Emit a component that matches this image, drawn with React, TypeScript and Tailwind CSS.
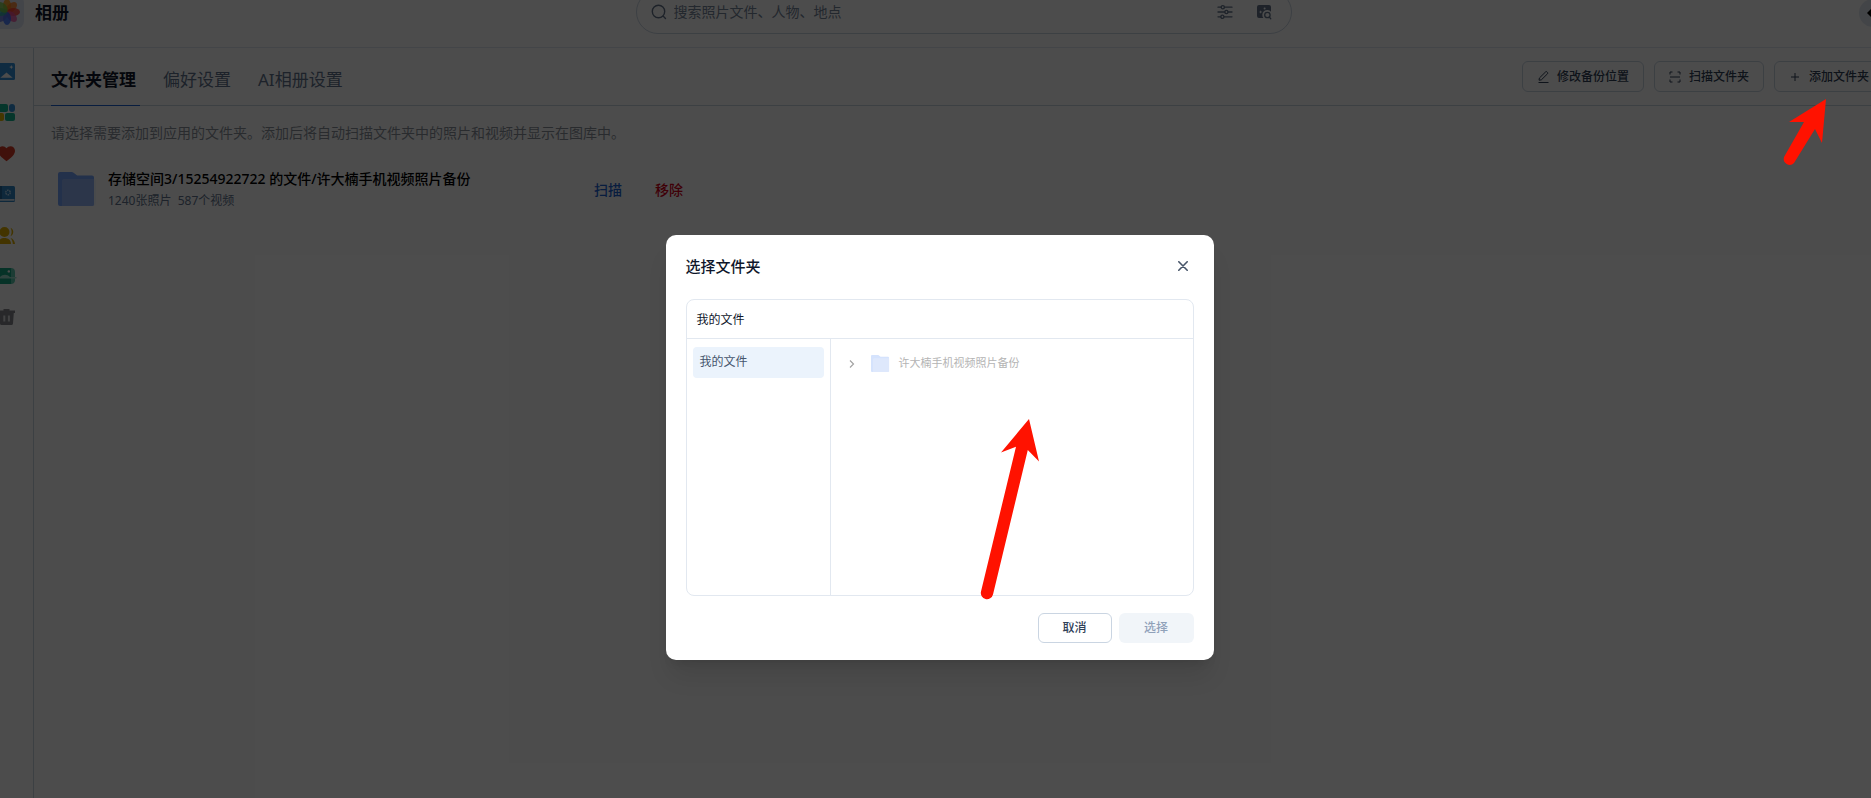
import React from 'react';

const SearchIcon: React.FC = () => (
  <svg viewBox="0 0 16 16" className="size-4 shrink-0" fill="none" stroke="#64748b" strokeWidth="1.4" strokeLinecap="round">
    <circle cx="7.5" cy="7.5" r="6.2" />
    <path d="M12.3 12.3l2.200 2.200" />
  </svg>
);

const FilterIcon: React.FC = () => (
  <svg viewBox="0 0 16 16" className="size-4" fill="none" stroke="#64748b" strokeWidth="1.3" strokeLinecap="round">
    <path d="M1 3.2h3.2M7.4 3.2H15M1 8h6.800M11 8h4M1 12.8h2.8M7 12.8h8" />
    <circle cx="5.8" cy="3.2" r="1.6" />
    <circle cx="9.4" cy="8" r="1.6" />
    <circle cx="5.4" cy="12.8" r="1.6" />
  </svg>
);

const ImageSearchIcon: React.FC = () => (
  <svg viewBox="0 0 16 16" className="size-4" fill="none">
    <path d="M3 1h10a2 2 0 0 1 2 2v4.800a4.600 4.600 0 0 0-7.600 6.200H3a2 2 0 0 1-2-2V3a2 2 0 0 1 2-2z" fill="#64748b" />
    <circle cx="8.600" cy="4.4" r="1" fill="#fff" />
    <path d="M4.6 6.2l.6 1.200 1.200.5-1.200.6-.6 1.200-.5-1.200-1.200-.6 1.200-.5z" fill="#fff" />
    <circle cx="11.400" cy="11" r="2.700" stroke="#64748b" strokeWidth="1.3" />
    <path d="M13.400 13l1.400 1.800" stroke="#64748b" strokeWidth="1.3" strokeLinecap="round" />
  </svg>
);

const petals = ['#ff9500', '#ff7a1a', '#ff3b30', '#e84fa0', '#2f6bff', '#5a6fe0', '#2fb5a0', '#7ac943'];

const LogoIcon: React.FC = () => (
  <svg viewBox="0 0 34 34" className="-ml-[10px] size-[34px] shrink-0">
    <rect width="34" height="34" rx="8" fill="#e2e6f5" />
    {petals.map((color, i) => (
      <ellipse key={color} cx="17" cy="10.5" rx="4" ry="6.5" fill={color} opacity="0.8" transform={`rotate(${i * 45} 17 17)`} />
    ))}
  </svg>
);

const FolderIcon: React.FC<{ className: string }> = ({ className }) => (
  <svg viewBox="0 0 38 34" className={className}>
    <path d="M2 0h11.5c1 0 1.6.3 2.4.9l2.6 2c.6.4 1 .6 1.8.6H34a2 2 0 0 1 2 2V32a2 2 0 0 1-2 2H2a2 2 0 0 1-2-2V2a2 2 0 0 1 2-2z" fill="#76a4fa" />
    <path d="M6.5 7H36a2 2 0 0 1 2 2v21.5a3.5 3.5 0 0 1-3.5 3.5H4V9.5A2.5 2.5 0 0 1 6.5 7z" fill="#dbe7ff" opacity="0.35" />
    <path d="M6.5 7H36v25a2 2 0 0 1-2 2H4V9.5A2.5 2.5 0 0 1 6.5 7z" fill="#94b6f8" />
  </svg>
);

const sideItems: { label: string; icon: React.ReactNode }[] = [
  {
    label: '图库',
    icon: (
      <>
        <rect width="17" height="17" rx="1.5" fill="#3391da" />
        <path d="M2.300 14.800l6.200-5.400 6.200 5.400z" fill="#fff" />
        <path d="M13.300 2l.6 1.500 1.500.6-1.500.6-.6 1.500-.6-1.500-1.500-.6 1.500-.6z" fill="#fff" />
      </>
    ),
  },
  {
    label: '分类',
    icon: (
      <>
        <rect x="0" y="0" width="10" height="8" rx="2" fill="#12b592" />
        <rect x="11" y="0" width="6" height="8" rx="3" fill="#3391da" />
        <rect x="0" y="9" width="6" height="8" rx="2" fill="#e6b800" />
        <rect x="7" y="9" width="10" height="8" rx="2" fill="#12b592" />
      </>
    ),
  },
  {
    label: '收藏',
    icon: <path d="M8.5 16.2C4 12.8 0 9.8 0 5.8 0 3 2 1.2 4.5 1.2c1.7 0 3 .8 4 2 1-1.2 2.3-2 4-2C15 1.2 17 3 17 5.800c0 4-4 7-8.500 10.400z" fill="#d83a25" />,
  },
  {
    label: '相簿',
    icon: (
      <>
        <rect width="17" height="16" rx="1.5" fill="#2f86c6" />
        <rect x="0" width="4" height="13" fill="#22699f" />
        <rect x="2" y="13" width="14.5" height="1.8" fill="#d5e6f5" />
        <circle cx="10" cy="6.5" r="2.3" fill="none" stroke="#b9dcf4" strokeWidth="1.4" strokeDasharray="1.5 .7" />
      </>
    ),
  },
  {
    label: '人物',
    icon: (
      <>
        <circle cx="6.5" cy="5" r="5" fill="#dfb000" />
        <path d="M0 17c0-4 3-6 6.500-6s6.500 2 6.500 6z" fill="#dfb000" />
        <path d="M12.500.8c3.700 1.500 3.700 7 0 8.400 1.500-2.500 1.500-6 0-8.400zM12.500 11c2.700.8 4.300 3 4.500 6h-2.200c-.1-2.400-.9-4.400-2.300-6z" fill="#dfb000" />
      </>
    ),
  },
  {
    label: '回忆',
    icon: (
      <>
        <rect y="0" width="14.5" height="16" rx="2" fill="#16a884" />
        <path d="M13 0a4 4 0 0 1 4 4v9a4 4 0 0 1-4 3z" fill="#5fcab0" />
        <path d="M2 9c3-3 7-3 10 0h6.500v1.500H2z" fill="#9fe0cf" />
        <circle cx="10.8" cy="3.400" r="1.2" fill="#fff" />
      </>
    ),
  },
  {
    label: '回收站',
    icon: (
      <>
        <path d="M5.5 1.500V0h6v1.500H17V4H0V1.500z" fill="#85888d" />
        <path d="M1.200 4h14.600l-.8 10.500a1.600 1.600 0 0 1-1.600 1.500H3.600A1.600 1.600 0 0 1 2 14.500z" fill="#85888d" />
        <path d="M5.300 6.500h2v6h-2zM9.900 6.500h2v6h-2z" fill="#dcdde0" />
      </>
    ),
  },
];

const tabs = ['偏好设置', 'AI相册设置'];

const actions: { label: string; icon: React.ReactNode }[] = [
  { label: '修改备份位置', icon: <path d="M1.5 11.5h10M2 9.2l.4-2.2L8.600.9a1 1 0 0 1 1.400 0l.5.5a1 1 0 0 1 0 1.400L4.300 8.900z" /> },
  { label: '扫描文件夹', icon: <path d="M1 3.500V1h2.500M8.500 1H11v2.500M11 8.500V11H8.500M3.500 11H1V8.500M1 6h10" /> },
  { label: '添加文件夹', icon: <path d="M6 2v8M2 6h8" /> },
];

const Header: React.FC = () => (
  <header className="flex h-12 items-end border-b border-slate-200">
    <div className="mb-[18px] flex flex-1 items-end">
      <LogoIcon />
      <h1 className="mb-1 ml-[11px] text-[17px] leading-6 font-bold text-slate-900">相册</h1>
    </div>
    <div className="mb-[13px] ml-14 flex h-[44px] w-[656px] items-center rounded-full border border-slate-300 px-[14px]">
      <SearchIcon />
      <input
        type="search"
        aria-label="搜索"
        placeholder="搜索照片文件、人物、地点"
        className="ml-[7px] min-w-0 flex-1 text-[14px] leading-5 outline-none placeholder:text-[#76859a]"
      />
      <button type="button" aria-label="筛选" className="mr-[23px]"><FilterIcon /></button>
      <button type="button" aria-label="以图搜图" className="mr-[5px]"><ImageSearchIcon /></button>
    </div>
    <div className="mb-5 flex flex-1 justify-end">
      <button type="button" aria-label="账户" className="-mr-4 flex size-7 items-center justify-center rounded-full bg-slate-200">
        <svg viewBox="0 0 12 12" className="size-3"><path d="M6 0l6 6-6 6-6-6z" fill="#000" /></svg>
      </button>
    </div>
  </header>
);

const Sidebar: React.FC = () => (
  <nav className="flex w-[34px] shrink-0 flex-col gap-6 border-r border-slate-300 pt-[15px]">
    {sideItems.map((item) => (
      <a key={item.label} href="#" aria-label={item.label} className="-ml-[2px] block size-[17px]">
        <svg viewBox="0 0 17 17" className="size-[17px] overflow-visible">{item.icon}</svg>
      </a>
    ))}
  </nav>
);

const FolderDialog: React.FC = () => (
  <div role="dialog" aria-labelledby="dialog-title" className="relative w-[548px] rounded-[10px] bg-white px-5 pt-[19px] pb-[17px] shadow-xl">
    <div className="flex items-center justify-between">
      <h2 id="dialog-title" className="text-[15px] leading-6 font-medium text-slate-900">选择文件夹</h2>
      <button type="button" aria-label="关闭" className="mr-[6px]">
        <svg viewBox="0 0 10 10" className="size-[10px]" stroke="#475569" strokeWidth="1.6" strokeLinecap="round">
          <path d="M.8.8l8.4 8.4M9.2.8L.8 9.2" />
        </svg>
      </button>
    </div>
    <div className="mt-[21px] overflow-hidden rounded-lg border border-slate-200">
      <div className="flex h-[39px] items-center border-b border-slate-200 px-[10px] pt-[2px] text-[12px] text-slate-900">我的文件</div>
      <div className="flex h-[256px]">
        <div className="w-[144px] shrink-0 border-r border-slate-200 px-[6px] py-2">
          <button type="button" className="h-[31px] w-full rounded bg-[#ebf3fc] px-[7px] text-left text-[12px] text-slate-600">我的文件</button>
        </div>
        <div className="flex h-[50px] items-center pl-[18px] text-[11px] text-[#b4b4b4]">
          <svg viewBox="0 0 6 8" className="h-2 w-[6px]" fill="none" stroke="#a3a3a3" strokeWidth="1.2"><path d="M1 .5L4.5 4 1 7.5" /></svg>
          <FolderIcon className="ml-4 h-[17px] w-[19px] opacity-30" />
          <span className="ml-[9px]">许大楠手机视频照片备份</span>
        </div>
      </div>
    </div>
    <div className="mt-[17px] flex justify-end gap-[7px] text-[12px] font-medium">
      <button type="button" className="h-[30px] w-[74px] rounded-md border border-slate-300 text-slate-700">取消</button>
      <button type="button" disabled className="h-[30px] w-[75px] rounded-md bg-slate-100 text-slate-400">选择</button>
    </div>
    <svg viewBox="0 0 60 182" className="absolute top-[183px] left-[314px] h-[182px] w-[60px]" fill="#ff1200">
      <path d="M49 1L59 43.500 47.800 32 13 176.500a6 6 0 0 1-12-3L36 28.800 21 34.500z" />
    </svg>
  </div>
);

const App: React.FC = () => (
  <div className="relative flex min-h-screen flex-col overflow-hidden bg-white font-['Noto_Sans','Noto_Sans_CJK_SC',sans-serif]">
    <Header />
    <div className="flex flex-1">
      <Sidebar />
      <main className="min-w-0 flex-1">
        <div className="flex h-[58px] items-stretch border-b border-slate-300 pl-[17px]">
          <div className="flex flex-1 text-[17px] leading-6">
            <button type="button" className="-mb-px border-b border-[#1b62d4] pt-[7px] pr-1 font-bold text-slate-900">文件夹管理</button>
            {tabs.map((tab) => (
              <button key={tab} type="button" className="ml-[23px] pt-[6px] pr-1 text-slate-500">{tab}</button>
            ))}
          </div>
          <div className="-mr-[13px] flex items-start gap-[10px] pt-[13px]">
            {actions.map((action) => (
              <button key={action.label} type="button" className="flex h-[31px] items-center gap-2 rounded-md border border-slate-300 px-[14px] text-[12px] font-medium text-slate-700">
                <svg viewBox="0 0 12 12" className="size-3" fill="none" stroke="currentColor">{action.icon}</svg>
                {action.label}
              </button>
            ))}
          </div>
        </div>
        <p className="mt-[15px] pl-[17px] text-[14px] leading-6 text-[#8b929c]">
          请选择需要添加到应用的文件夹。添加后将自动扫描文件夹中的照片和视频并显示在图库中。
        </p>
        <div className="mt-[22px] flex items-center pl-6">
          <FolderIcon className="h-[34px] w-[38px] shrink-0" />
          <div className="ml-3 w-[486px]">
            <div className="text-[14px] leading-6 font-medium text-black">存储空间3/15254922722 的文件/许大楠手机视频照片备份</div>
            <div className="text-[12px] leading-5 whitespace-pre text-slate-500">1240张照片  587个视频</div>
          </div>
          <button type="button" className="text-[14px] font-medium text-[#1b62d4]">扫描</button>
          <button type="button" className="ml-[33px] text-[14px] font-medium text-[#d4001a]">移除</button>
        </div>
      </main>
    </div>
    <div className="absolute inset-0 flex items-center justify-center bg-black/70 pt-24 pl-2">
      <FolderDialog />
    </div>
    <svg viewBox="0 0 46 70" className="absolute top-[98px] right-[43px] h-[70px] w-[46px]" fill="#ff1200">
      <path d="M44 1L40 45 33 31 12 65a6 6 0 0 1-10-6L22 24 7 24z" />
    </svg>
  </div>
);

export default App;
